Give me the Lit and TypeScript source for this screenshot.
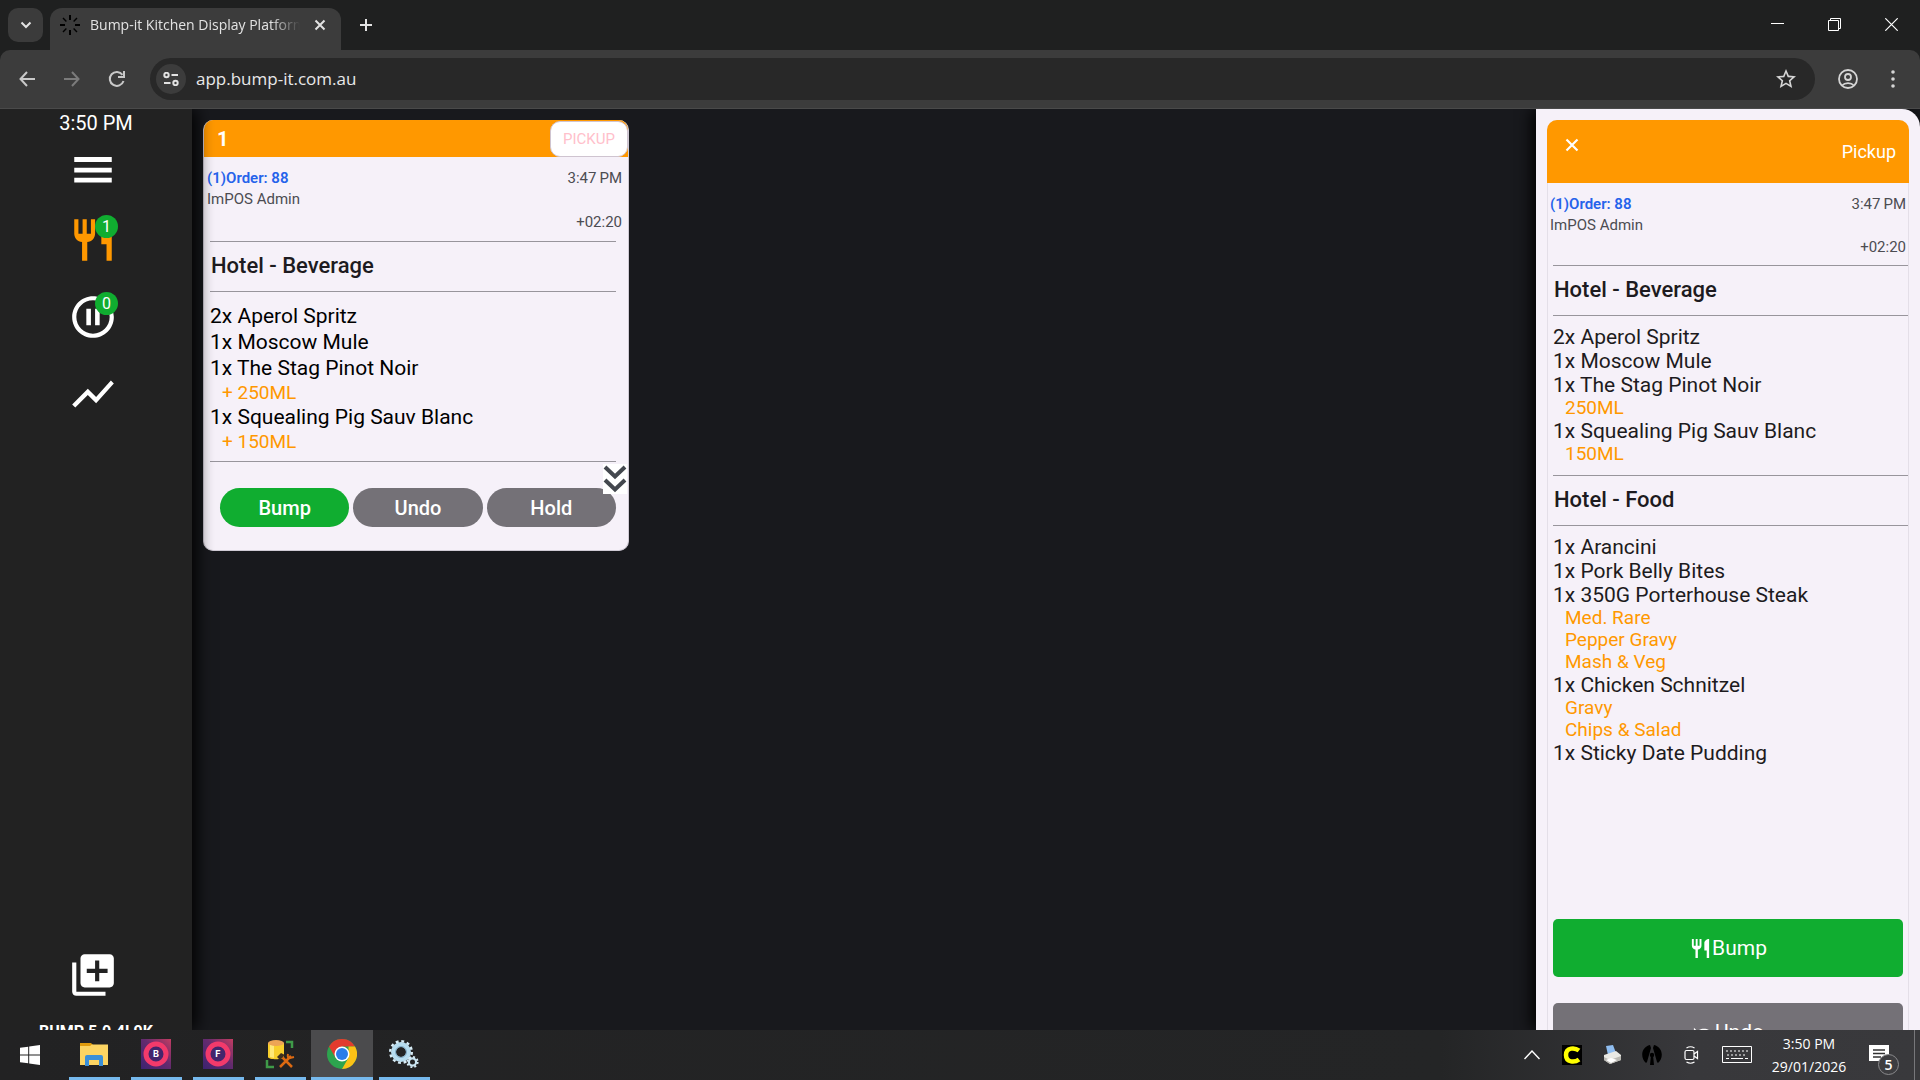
import { LitElement, html, css, svg } from "lit";
import { customElement, property } from "lit/decorators.js";

type Line = { text: string; sub?: boolean };
type Section = { name: string; lines: Line[] };

const beverage: Line[] = [
  { text: "2x Aperol Spritz" },
  { text: "1x Moscow Mule" },
  { text: "1x The Stag Pinot Noir" },
  { text: "250ML", sub: true },
  { text: "1x Squealing Pig Sauv Blanc" },
  { text: "150ML", sub: true },
];
const food: Line[] = [
  { text: "1x Arancini" },
  { text: "1x Pork Belly Bites" },
  { text: "1x 350G Porterhouse Steak" },
  { text: "Med. Rare", sub: true },
  { text: "Pepper Gravy", sub: true },
  { text: "Mash & Veg", sub: true },
  { text: "1x Chicken Schnitzel" },
  { text: "Gravy", sub: true },
  { text: "Chips & Salad", sub: true },
  { text: "1x Sticky Date Pudding" },
];

const forkPath =
  "M11 9H9V2H7v7H5V2H3v7c0 2.12 1.66 3.84 3.75 3.97V22h2.5v-9.03C11.34 12.84 13 11.12 13 9V2h-2v7zm5-3v8h2.5v8H21V2c-2.76 0-5 2.24-5 4z";

const base = css`
  :host, * { box-sizing: border-box; }
  button { font: inherit; color: inherit; background: none; border: 0; padding: 0; cursor: pointer; }
  svg { display: block; flex: none; }
`;

@customElement("browser-chrome")
export class BrowserChrome extends LitElement {
  static styles = [base, css`
    :host { display: block; flex: none; background: #1f2020; color: #e3e3e3; font-family: "Open Sans", "Noto Sans", sans-serif; }
    .tabs { display: flex; height: 50px; padding-left: 8px; }
    .search { width: 35px; height: 34px; margin-top: 8px; border-radius: 10px; background: #3b3b3b; display: grid; place-items: center; }
    .tab { display: flex; align-items: center; width: 291px; height: 42px; margin: 8px 0 0 7px; padding: 0 11px 8px 10px; border-radius: 12px 12px 0 0; background: #3c3c3c; }
    .title { flex: 1; margin-left: 10px; font-size: 14px; line-height: 20px; white-space: nowrap; overflow: hidden; mask-image: linear-gradient(90deg, #000 86%, transparent); }
    .x { width: 20px; height: 20px; display: grid; place-items: center; margin-left: 10px; }
    .new { width: 34px; height: 34px; margin: 8px 0 0 8px; display: grid; place-items: center; }
    .controls { display: flex; margin-left: auto; }
    .controls button { width: 57px; height: 48px; display: grid; place-items: center; }
    .bar { display: flex; align-items: center; height: 59px; padding: 0 9px 0 8px; background: #3c3c3c; border-radius: 10px 10px 0 0; border-bottom: 1px solid #4a4a4a; }
    .nav { width: 38px; height: 38px; margin-right: 7px; display: grid; place-items: center; }
    .address { flex: 1; display: flex; align-items: center; height: 42px; margin: 0 14px 0 7px; padding: 0 17px 0 6px; border-radius: 21px; background: #282828; }
    .site { width: 30px; height: 30px; border-radius: 50%; background: #3c3c3c; display: grid; place-items: center; }
    .url { flex: 1; margin-left: 10px; padding: 0; border: 0; background: none; color: #e8e8e8; font: 17px/24px "Open Sans", "Noto Sans", sans-serif; outline: none; }
    .end { width: 37px; height: 38px; display: grid; place-items: center; }
    .more { margin-left: 8px; }
  `];

  render() {
    return html`
      <div class="tabs">
        <button class="search" aria-label="Search tabs">
          <svg width="12" height="8" viewBox="0 0 12 8" fill="none" stroke="#e3e3e3" stroke-width="2"><path d="M1.5 1.5 6 6l4.5-4.5" /></svg>
        </button>
        <div class="tab">
          <svg width="20" height="20" viewBox="0 0 20 20" stroke="#000" stroke-width="2">
            <path d="M10 0v5M10 15v5M0 10h5M15 10h5" /><path d="m3 3 3.4 3.4M13.6 13.6 17 17M3 17l3.4-3.4M13.6 6.4 17 3" stroke-width="1.4" />
          </svg>
          <span class="title">Bump-it Kitchen Display Platform</span>
          <button class="x" aria-label="Close tab">
            <svg width="12" height="12" viewBox="0 0 12 12" stroke="#e3e3e3" stroke-width="2"><path d="m1.5 1.5 9 9M10.5 1.5l-9 9" /></svg>
          </button>
        </div>
        <button class="new" aria-label="New tab">
          <svg width="14" height="14" viewBox="0 0 14 14" stroke="#e3e3e3" stroke-width="2"><path d="M7 1v12M1 7h12" /></svg>
        </button>
        <div class="controls">
          <button aria-label="Minimise"><svg width="13" height="13" viewBox="0 0 13 13"><path fill="#fff" d="M0 5h13v1H0z" /></svg></button>
          <button aria-label="Restore">
            <svg width="13" height="13" viewBox="0 0 13 13" fill="none" stroke="#fff"><path d="M.5 2.5h10v10H.5zM2.5 2.5v-2h10v10h-2" /></svg>
          </button>
          <button aria-label="Close"><svg width="13" height="13" viewBox="0 0 13 13" stroke="#fff" stroke-width="1.2"><path d="m.3.3 12.4 12.4M12.7.3.3 12.7" /></svg></button>
        </div>
      </div>
      <div class="bar">
        <button class="nav" aria-label="Back">
          <svg width="16" height="16" viewBox="0 0 16 16" fill="none" stroke="#c9c9c9" stroke-width="2"><path d="M8 1 1.5 8 8 15M1.5 8H16" /></svg>
        </button>
        <button class="nav" aria-label="Forward">
          <svg width="16" height="16" viewBox="0 0 16 16" fill="none" stroke="#7b7b7b" stroke-width="2"><path d="m8 1 6.5 7L8 15M14.5 8H0" /></svg>
        </button>
        <button class="nav" aria-label="Reload">
          <svg width="18" height="18" viewBox="0 0 18 18"><path fill="none" stroke="#c9c9c9" stroke-width="2" d="M15.5 11A7 7 0 1 1 14.5 4.8M16 1v6h-6" /></svg>
        </button>
        <div class="address">
          <button class="site" aria-label="View site information">
            <svg width="16" height="14" viewBox="0 0 16 14" fill="none" stroke="#e3e3e3" stroke-width="2"><circle cx="3.5" cy="3" r="2.2" /><path d="M8.5 3H15M1 11h6.5" /><circle cx="12.5" cy="11" r="2.2" /></svg>
          </button>
          <input class="url" aria-label="Address" value="app.bump-it.com.au" />
          <button aria-label="Bookmark this page">
            <svg width="24" height="24" viewBox="0 0 24 24" fill="#d5d5d5"><path d="m22 9.24-7.19-.62L12 2 9.19 8.63 2 9.24l5.46 4.73L5.82 21 12 17.27 18.18 21l-1.63-7.03L22 9.24zM12 15.4l-3.76 2.27 1-4.28-3.32-2.88 4.38-.38L12 6.1l1.71 4.04 4.38.38-3.32 2.88 1 4.28L12 15.4z" /></svg>
          </button>
        </div>
        <button class="end" aria-label="Profile">
          <svg width="20" height="20" viewBox="0 0 20 20" fill="none" stroke="#d5d5d5" stroke-width="1.8"><circle cx="10" cy="10" r="9" /><circle cx="10" cy="8" r="3" /><path d="M4 16.5c3-3.3 9-3.3 12 0" /></svg>
        </button>
        <button class="end more" aria-label="Browser menu">
          <svg width="4" height="18" viewBox="0 0 4 18" fill="#d5d5d5"><circle cx="2" cy="2" r="1.8" /><circle cx="2" cy="9" r="1.8" /><circle cx="2" cy="16" r="1.8" /></svg>
        </button>
      </div>
    `;
  }
}

@customElement("side-nav")
export class SideNav extends LitElement {
  static styles = [base, css`
    :host { display: flex; flex-direction: column; flex: none; width: 10%; background: #222; color: #fff; overflow: hidden; font-family: Roboto, sans-serif; box-shadow: 4px 0 16px #000; z-index: 1; }
    .time { text-align: center; font-size: 20px; line-height: 28px; }
    nav { display: flex; flex-direction: column; align-items: center; gap: 27px; margin: 8px 6px 0 0; flex: 1; }
    .item { position: relative; display: block; }
    .open { margin-bottom: -7px; }
    .add { margin-top: auto; }
    .badge { position: absolute; top: 0; left: 27px; width: 23px; height: 23px; border-radius: 50%; background: #10ad30; color: #fff; font-size: 16px; line-height: 23px; text-align: center; }
    .hot { color: #ff9800; }
    .version { margin: 20px 0 -14px; text-align: center; font-size: 16px; line-height: 24px; font-weight: 700; flex: none; }
  `];

  icon(path: string) {
    return svg`<svg width="50" height="50" viewBox="0 0 24 24" fill="currentColor"><path d=${path}/></svg>`;
  }

  render() {
    return html`
      <div class="time">3:50 PM</div>
      <nav>
        <button class="item open" aria-label="Menu">${this.icon("M3 18h18v-2.3H3V18zm0-4.8h18v-2.3H3v2.3zM3 5.8v2.3h18V5.8H3z")}</button>
        <button class="item hot" aria-label="Orders">${this.icon(forkPath)}<span class="badge">1</span></button>
        <button class="item" aria-label="On hold">
          ${this.icon("M8.8 16h2.2V8H8.8v8zM12 2C6.48 2 2 6.48 2 12s4.48 10 10 10 10-4.48 10-10S17.52 2 12 2zm0 18c-4.41 0-8-3.59-8-8s3.59-8 8-8 8 3.59 8 8-3.59 8-8 8zm1-4h2.2V8H13v8z")}
          <span class="badge">0</span>
        </button>
        <button class="item" aria-label="Statistics">${this.icon("m3.5 18.49 6-6.01 4 4L22 6.92l-1.41-1.41-7.09 7.97-4-4L2 16.99z")}</button>
        <button class="item add" aria-label="Add screen">${this.icon("M4 6H2v14c0 1.1.9 2 2 2h14v-2H4V6zm16-4H8c-1.1 0-2 .9-2 2v12c0 1.1.9 2 2 2h12c1.1 0 2-.9 2-2V4c0-1.1-.9-2-2-2zm-1 9h-4v4h-2v-4H9V9h4V5h2v4h4v2z")}</button>
      </nav>
      <div class="version">BUMP 5.0.4L9K</div>
    `;
  }
}

const ticket = css`
  .meta { display: grid; grid-template-columns: 1fr auto; font-size: 15px; line-height: 21px; color: #4c4c52; }
  .order { color: #2563eb; font-weight: 600; }
  .elapsed { grid-area: 3 / 2; text-align: right; }
  h2 { margin: 0; padding: 0 0 0 1px; height: 51px; font-size: 22px; line-height: 48px; font-weight: 500; color: #1d1b20; border: solid #98959c; border-width: 1px 0; }
  ul { list-style: none; margin: 0; padding: 0; font-size: 21px; }
  .sub { color: #ff9800; font-size: 19px; padding-left: 12px; }
`;

@customElement("order-card")
export class OrderCard extends LitElement {
  static styles = [base, ticket, css`
    :host { display: block; position: relative; width: 426px; max-width: 100%; border-radius: 10px; background: #f6f1f9; border: 1px solid #cfcad4; border-top: 0; font-family: Roboto, sans-serif; overflow: hidden; }
    header { display: flex; align-items: center; justify-content: space-between; height: 37px; background: #ff9800; color: #fff; font-size: 20px; font-weight: 700; padding-left: 13px; }
    .kind { width: 78px; height: 36px; display: grid; place-items: center; border: 1px solid #cfc4d0; border-radius: 10px; background: #fff; color: #ffc0cb; font-size: 15px; font-weight: 400; }
    .meta { padding: 11px 6px 8px 3px; }
    .elapsed { margin-top: 2px; }
    .body { margin: 0 12px 0 6px; border-bottom: 1px solid #98959c; }
    ul { padding: 11px 0 8px; line-height: 26px; color: #000; }
    .sub { line-height: 23px; }
    .actions { display: grid; grid-template-columns: repeat(3, 1fr); gap: 4px; margin: 26px 12px 23px 16px; }
    .actions button { height: 39px; border-radius: 20px; background: #747177; color: #fff; font-size: 20px; font-weight: 500; }
    .actions .go { background: #10ad30; }
    .scroll { position: absolute; right: 1px; bottom: 56px; width: 24px; height: 30px; background: #fff; }
  `];

  render() {
    return html`
      <header><span>1</span><span class="kind">PICKUP</span></header>
      <div class="meta">
        <span class="order">(1)Order: 88</span><span>3:47&#8201;PM</span>
        <span>ImPOS Admin</span>
        <span class="elapsed">+02:20</span>
      </div>
      <div class="body">
        <h2>Hotel - Beverage</h2>
        <ul>${beverage.map((l) => html`<li class=${l.sub ? "sub" : "dish"}>${l.sub ? "+ " : ""}${l.text}</li>`)}</ul>
      </div>
      <div class="actions"><button class="go">Bump</button><button>Undo</button><button>Hold</button></div>
      <button class="scroll" aria-label="Scroll down">
        <svg width="24" height="30" viewBox="0 0 24 30" fill="none" stroke="#43474e" stroke-width="4"><path d="m2 3 10 9.5L22 3M2 16l10 9.5L22 16" /></svg>
      </button>
    `;
  }
}

@customElement("order-panel")
export class OrderPanel extends LitElement {
  @property({ attribute: false }) sections: Section[] = [];

  static styles = [base, ticket, css`
    :host { display: block; flex: none; width: 20%; padding: 11px 11px 0; border-top-right-radius: 18px; background: #f6f1f9; font-family: Roboto, sans-serif; box-shadow: -4px 0 16px #000; overflow: hidden; }
    .sheet { display: flex; flex-direction: column; border: 1px solid #e4dfe8; border-radius: 10px 10px 0 0; min-height: 100%; }
    header { display: flex; justify-content: space-between; height: 63px; margin: -1px -1px 0; padding: 18px 13px 0 18px; background: #ff9800; border-radius: 10px 10px 0 0; color: #fff; font-size: 18px; line-height: 28px; }
    .shut { width: 14px; height: 14px; }
    .meta { padding: 11px 2px 7px; }
    .elapsed { margin-top: 1px; }
    .list { margin-left: 5px; }
    ul { padding: 9px 0 10px; line-height: 24px; color: #1d1b20; }
    .sub { line-height: 22px; }
    .actions { display: grid; gap: 26px; margin: 144px 5px 0; }
    .actions button { display: flex; align-items: center; justify-content: center; height: 58px; border-radius: 5px; background: #747177; color: #fff; font-size: 21px; }
    .actions .go { background: #10ad30; }
  `];

  render() {
    return html`
      <div class="sheet">
        <header>
          <button class="shut" aria-label="Close order">
            <svg width="14" height="14" viewBox="0 0 14 14" stroke="#fff" stroke-width="2.2"><path d="m1.5 1.5 11 11M12.5 1.5l-11 11" /></svg>
          </button>
          <span>Pickup</span>
        </header>
        <div class="meta">
          <span class="order">(1)Order: 88</span><span>3:47&#8201;PM</span>
          <span>ImPOS Admin</span>
          <span class="elapsed">+02:20</span>
        </div>
        <div class="list">
          ${this.sections.map((s) => html`<h2>${s.name}</h2><ul>${s.lines.map((l) => html`<li class=${l.sub ? "sub" : "dish"}>${l.text}</li>`)}</ul>`)}
        </div>
        <div class="actions">
          <button class="go"><svg width="23" height="23" viewBox="0 0 24 24" fill="#fff"><path d=${forkPath} /></svg>Bump</button>
          <button><svg width="23" height="23" viewBox="0 0 24 24" fill="#fff"><path d="M12.5 8c-2.65 0-5.05.99-6.9 2.6L2 7v9h9l-3.62-3.62c1.39-1.16 3.16-1.88 5.12-1.88 3.54 0 6.55 2.31 7.6 5.5l2.37-.78C21.08 11.03 17.15 8 12.5 8z" /></svg>Undo</button>
        </div>
      </div>
    `;
  }
}

@customElement("task-bar")
export class TaskBar extends LitElement {
  static styles = [base, css`
    :host { display: flex; flex: none; height: 50px; background: linear-gradient(90deg, #222223, #242526 75%, #38383b 88%, #39393c); color: #fff; font-family: "Open Sans", "Noto Sans", sans-serif; z-index: 2; }
    .start { width: 60px; margin-right: 3px; display: grid; place-items: center; }
    .apps { display: flex; }
    .app { width: 62px; display: grid; grid-template-rows: 47px 3px; justify-items: center; align-items: center; }
    .app::after { content: ""; width: 51px; height: 3px; background: #76b9ed; }
    .active { background: #4b4b4d; }
    .active::after { width: 100%; }
    .tray { display: flex; align-items: center; margin-left: auto; padding-right: 5px; }
    .tray button { width: 40px; height: 50px; display: grid; place-items: center; }
    .tray .keys { width: 50px; }
    .tray .clock { width: 94px; font-size: 14px; line-height: 23px; text-align: center; place-content: center; }
    .tray .notes { position: relative; width: 46px; margin-right: 12px; }
    .count { position: absolute; left: 22px; top: 24px; width: 21px; height: 21px; border: 1px solid #8a8a8c; border-radius: 50%; background: #3d3d40; font-size: 14px; line-height: 19px; font-weight: 600; }
    .edge { width: 1px; height: 50px; background: #77777a; }
  `];

  badgeIcon(letter: string, id: string) {
    return svg`<svg width="30" height="30" viewBox="0 0 30 30">
      <defs><linearGradient id=${id} x1="0" y1="1" x2="1" y2="0"><stop offset="0" stop-color="#3c2370"/><stop offset=".55" stop-color="#642b6e"/><stop offset="1" stop-color="#c43c62"/></linearGradient></defs>
      <path fill="url(#${id})" d="M0 0h30v30H0z"/><circle cx="15" cy="15" r="10" fill="#43256c" stroke="#f23a6b" stroke-width="5"/>
      <text x="15" y="18" text-anchor="middle" fill="#fff" font-size="9" font-weight="700" font-family="Inter, sans-serif">${letter}</text></svg>`;
  }

  render() {
    return html`
      <button class="start" aria-label="Start">
        <svg width="20" height="20" viewBox="0 0 20 20" fill="#fff"><path d="m0 2.8 8.2-1.1v7.8H0zM9.2 1.5 20 0v9.5H9.2zM0 10.5h8.2v7.8L0 17.2zM9.2 10.5H20V20L9.2 18.5z" /></svg>
      </button>
      <div class="apps">
        <button class="app" aria-label="File Explorer">
          <svg width="28" height="24" viewBox="0 0 28 24"><path fill="#e09b0c" d="M0 1h11l2 2v3H0z" /><path fill="#fcd462" d="M0 4h10l2-1.5h16V23H0z" /><path fill="#3a8fd8" d="M5 24V15q0-2 2-2h14q2 0 2 2v9h-4v-6H9v6z" /></svg>
        </button>
        <button class="app" aria-label="Bump-it B">${this.badgeIcon("B", "gb")}</button>
        <button class="app" aria-label="Bump-it F">${this.badgeIcon("F", "gf")}</button>
        <button class="app" aria-label="Database tools">
          <svg width="30" height="30" viewBox="0 0 30 30"><path fill="#f8cf2c" d="M3 4v14c0 3 16 3 16 0V4z" /><path fill="#ffe979" d="M5 6h4v13l-4-1z" /><ellipse cx="11" cy="4" rx="8" ry="3" fill="#eda556" />
            <path d="M21 3h6v6M2 21v7h7" fill="none" stroke="#3f9a48" stroke-width="2.5" /><path d="m15 28 11-11M16 17l11 11" stroke="#dd6a12" stroke-width="2.5" /><path d="m12 18 4-4 4 2-5 5z" fill="#40301f" /><path d="M23 15q-1 4 2 4l4-1" fill="none" stroke="#dd6a12" stroke-width="2" /></svg>
        </button>
        <button class="app active" aria-label="Google Chrome">
          <svg width="30" height="30" viewBox="0 0 30 30"><circle cx="15" cy="15" r="15" fill="#2da44e" /><path fill="#e33b2e" d="M2 7.5a15 15 0 0 1 26 0H15L8.5 18.8z" /><path fill="#fbc116" d="M28 7.5A15 15 0 0 1 15 30l6.5-11.2V7.5z" /><circle cx="15" cy="15" r="7.5" fill="#fff" /><circle cx="15" cy="15" r="6" fill="#2b7de9" /></svg>
        </button>
        <button class="app" aria-label="Services">
          <svg width="30" height="28" viewBox="0 0 30 28" fill="none"><circle cx="12" cy="12" r="7.5" stroke="#b6dcef" stroke-width="5" /><circle cx="12" cy="12" r="10.8" stroke="#d8edf7" stroke-width="2.4" stroke-dasharray="2.9 2.75" /><circle cx="12" cy="12" r="5.5" stroke="#7fa9c4" /><circle cx="23.5" cy="22" r="3.6" stroke="#c9e4f2" stroke-width="2.2" /><circle cx="23.5" cy="22" r="5.2" stroke="#d8edf7" stroke-width="1.8" stroke-dasharray="2 2.08" /></svg>
        </button>
      </div>
      <div class="tray">
        <button aria-label="Show hidden icons"><svg width="16" height="10" viewBox="0 0 16 10" fill="none" stroke="#fff" stroke-width="1.4"><path d="m.5 9 7.5-8 7.5 8" /></svg></button>
        <button aria-label="C utility"><svg width="20" height="20" viewBox="0 0 20 20"><path d="M0 0h20v20H0z" /><path fill="none" stroke="#ff0" stroke-width="4.5" d="M17 5.5C13 2.5 4 2 4 10s9 7.5 13 4.5" /></svg></button>
        <button aria-label="Printer">
          <svg width="18" height="20" viewBox="0 0 18 20"><path fill="#8fbdf0" d="m3 1 7-1 3 8-8 2z" /><path fill="#e9e9e4" d="m1 10 12-4 5 4v5L7 19l-6-4z" /><path fill="#b9b8b2" d="m1 12 6 3 11-4v4L7 19l-6-4z" /><path fill="#fff" d="m3 15 5-2 6 2-6 3z" /></svg>
        </button>
        <button aria-label="Antenna"><svg width="20" height="20" viewBox="0 0 20 20"><path d="M4 18C-2 13-1 2 8 0l1 3-4 14zM16 18c6-5 5-16-4-18l-1 3 4 14z" /><circle cx="10" cy="10" r="2.2" /><path d="M9 10h2l1 10H8z" /></svg></button>
        <button aria-label="Meet now"><svg width="16" height="18" viewBox="0 0 16 18" fill="none" stroke="#fff" stroke-width="1.2"><rect x="1" y="4.5" width="9" height="9" rx="1.5" /><path d="m10 8 3.5-2.5v7L10 10M2.5 2q4-2.5 8 0M2.5 16q4 2.5 8 0" /></svg></button>
        <button class="keys" aria-label="Touch keyboard"><svg width="30" height="18" viewBox="0 0 30 18" fill="none" stroke="#fff"><path d="M.5.5h29v16H.5z" /><path d="M4 5h22M5 9h20" stroke-dasharray="2 2" /><path d="M4 12.5h3M9 12.5h12M23 12.5h3" /></svg></button>
        <button class="clock"><span>3:50 PM</span><span>29/01/2026</span></button>
        <button class="notes" aria-label="Notifications">
          <svg width="20" height="20" viewBox="0 0 20 20"><path fill="#fff" d="M0 0h20v16h-7l-3 4v-4H0z" /><path stroke="#333" stroke-width="1.3" d="M4 5h12M4 8.5h12M4 12h8" /></svg>
          <span class="count">5</span>
        </button>
        <span class="edge"></span>
      </div>
    `;
  }
}

@customElement("app-root")
export class AppRoot extends LitElement {
  static styles = css`
    :host { display: flex; flex-direction: column; height: 100vh; overflow: hidden; background: #18191d; }
    .content { display: flex; flex: 1; min-height: 0; overflow: hidden; }
    main { flex: 1; padding: 11px; }
  `;

  render() {
    return html`
      <browser-chrome></browser-chrome>
      <div class="content">
        <side-nav></side-nav>
        <main><order-card></order-card></main>
        <order-panel .sections=${[{ name: "Hotel - Beverage", lines: beverage }, { name: "Hotel - Food", lines: food }]}></order-panel>
      </div>
      <task-bar></task-bar>
    `;
  }
}
